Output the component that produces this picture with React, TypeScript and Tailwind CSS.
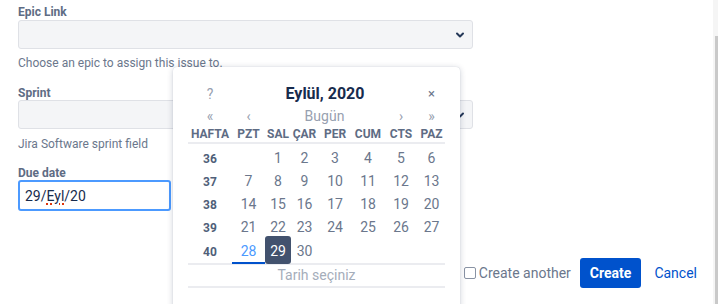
const weeks: { week: number; days: (number | null)[] }[] = [
  { week: 36, days: [null, 1, 2, 3, 4, 5, 6] },
  { week: 37, days: [7, 8, 9, 10, 11, 12, 13] },
  { week: 38, days: [14, 15, 16, 17, 18, 19, 20] },
  { week: 39, days: [21, 22, 23, 24, 25, 26, 27] },
];

const lastWeek: (number | null)[] = [28, 29, 30, null, null, null, null];

const dayNames = ["PZT", "SAL", "ÇAR", "PER", "CUM", "CTS", "PAZ"];

// same column widths for every row of the picker
const cols = "grid grid-cols-[44px_33px_26px_27px_34px_32px_34px_27px] items-center text-center";

function Chevron() {
  return (
    <svg width="10" height="10" viewBox="0 0 10 10" className="text-[#253858]">
      <path d="M2 3.5 L5 6.5 L8 3.5" fill="none" stroke="currentColor" strokeWidth="2" strokeLinecap="round" strokeLinejoin="round" />
    </svg>
  );
}

function SelectBox() {
  return (
    <div className="flex h-[29px] w-[455px] items-center justify-end rounded-[3px] border border-[#dfe1e6] bg-[#f4f5f7] pr-[7px]">
      <Chevron />
    </div>
  );
}

function Calendar() {
  return (
    <div className="absolute left-[173px] top-[67px] h-[250px] w-[287px] rounded-[4px] bg-white px-[15px] pt-[15px] shadow-[0_1px_6px_rgba(9,30,66,0.2),0_0_1px_rgba(9,30,66,0.2)]">
      <div className={`${cols} h-6`}>
        <span className="text-[14px] text-[#97a0af]">?</span>
        <span className="col-span-6 whitespace-nowrap text-[16px] font-bold text-[#172b4d]">Eylül, 2020</span>
        <span className="text-[13px] text-[#6b778c]">×</span>
      </div>
      <div className={`${cols} h-[19px] text-[14px] text-[#97a0af]`}>
        <span>«</span>
        <span>‹</span>
        <span className="col-span-4">Bugün</span>
        <span>›</span>
        <span>»</span>
      </div>
      <div className={`${cols} h-[19px] border-b-2 border-[#ebecf0] text-[12px] font-bold text-[#5e6c84]`}>
        <span>HAFTA</span>
        {dayNames.map((d) => (
          <span key={d}>{d}</span>
        ))}
      </div>
      {weeks.map((w) => (
        <div key={w.week} className={`${cols} h-[23px] pt-[4px] text-[14px] text-[#6b778c]`}>
          <span className="text-[12px] font-bold text-[#505f79]">{w.week}</span>
          {w.days.map((d, i) => (
            <span key={i}>{d ?? ""}</span>
          ))}
        </div>
      ))}
      <div className={`${cols} h-[29px] border-b-2 border-[#ebecf0] text-[14px] text-[#6b778c]`}>
        <span className="flex h-full items-center justify-center pt-[3px] text-[12px] font-bold text-[#505f79]">40</span>
        {lastWeek.map((d, i) => {
          if (d === 28) {
            return (
              <span key={i} className="flex h-full items-center justify-center border-b-2 border-[#0052cc] pt-[5px] text-[#4c9aff]">
                28
              </span>
            );
          }
          if (d === 29) {
            return (
              <span key={i} className="flex h-full items-center justify-center rounded-[3px] bg-[#42526e] pt-[3px] text-white">
                29
              </span>
            );
          }
          return (
            <span key={i} className="flex h-full items-center justify-center pt-[3px]">
              {d ?? ""}
            </span>
          );
        })}
      </div>
      <div className="flex h-[23px] items-center justify-center border-b-2 border-[#ebecf0] text-[14px] text-[#a5adba]">
        Tarih seçiniz
      </div>
    </div>
  );
}

export default function App() {
  return (
    <div className="relative flex h-[304px] w-[718px] overflow-hidden bg-white font-['Roboto',sans-serif]">
      <div className="flex flex-1 flex-col pl-[18px] pt-[3px]">
        <label className="h-4 text-[12px] font-bold leading-[18px] text-[#5e6c84]">Epic Link</label>
        <div className="mt-[1px]">
          <SelectBox />
        </div>
        <p className="mt-[5px] h-4 text-[12px] leading-[18px] text-[#6b778c]">Choose an epic to assign this issue to.</p>

        <label className="mt-[14px] h-4 text-[12px] font-bold leading-[18px] text-[#5e6c84]">Sprint</label>
        <div>
          <SelectBox />
        </div>
        <p className="mt-[6px] h-4 text-[12px] leading-[18px] text-[#6b778c]">Jira Software sprint field</p>

        <label className="mt-[13px] h-4 text-[12px] font-bold leading-[18px] text-[#5e6c84]">Due date</label>
        <div className="flex h-[31px] w-[153px] items-center rounded-[3px] border-2 border-[#4c9aff] bg-white pl-[5px] pt-[1px] text-[14px] text-[#172b4d]">
          29/<span className="underline decoration-[#de350b] decoration-dotted decoration-2 underline-offset-[3px]">Eyl</span>/20
        </div>

        <div className="mt-[47px] flex items-center justify-end pr-[16px]">
          <label className="flex items-center text-[14px] text-[#6b778c]">
            <span className="mr-[3px] h-[12px] w-[12px] rounded-[2px] border border-[#8993a4] bg-white" />
            Create another
          </label>
          <button className="ml-[9px] h-[30px] rounded-[3px] bg-[#0052cc] px-[10px] text-[14px] font-bold text-white">
            Create
          </button>
          <button className="ml-[13px] text-[14px] text-[#0052cc]">Cancel</button>
        </div>
      </div>

      <div className="flex w-[5px] flex-col bg-[#f5f5f5]">
        <div className="mt-[36px] ml-auto h-full w-[3px] bg-[#c9c9c9]" />
      </div>

      <Calendar />
    </div>
  );
}
